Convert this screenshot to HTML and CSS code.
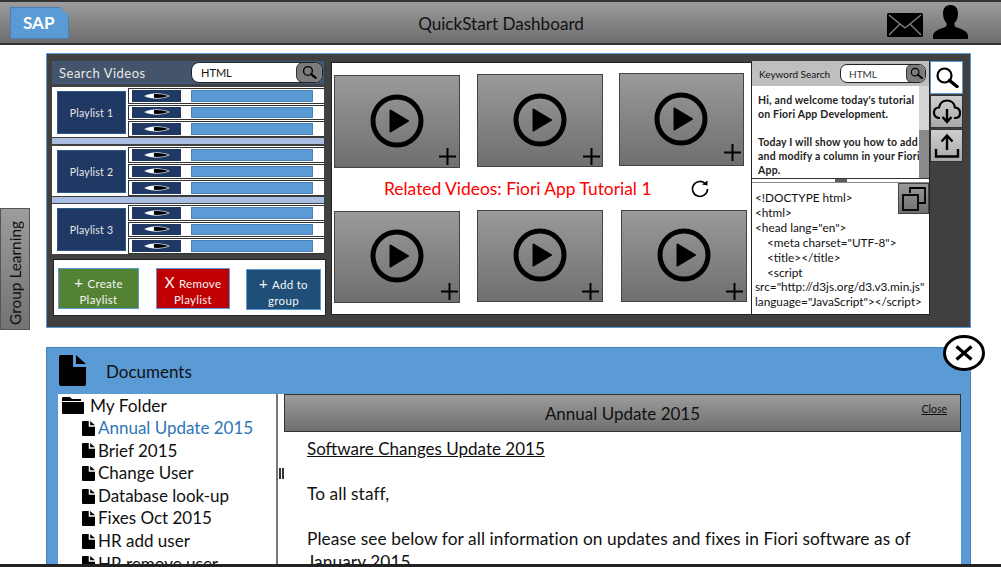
FILE: index.html
```html
<!DOCTYPE html>
<html lang="en">
<head>
<meta charset="UTF-8">
<title>QuickStart Dashboard</title>
<link rel="stylesheet" href="styles.css">
</head>
<body>
<svg class="defs" width="0" height="0" aria-hidden="true">
  <defs>
    <symbol id="eye" viewBox="0 0 26 8"><path d="M0 4C7 .5 18 .2 26 4 18 7.800 7 7.500 0 4Z" fill="#dfe7f2"/><path d="M2 4C5 2.500 7 2 9 2V6C7 6 5 5.500 2 4Z" fill="#fff"/><path d="M10 2.200C15 1.700 20 2.500 24.500 4 20 5.500 15 6.300 10 5.800Z" fill="#000"/></symbol>
    <symbol id="play" viewBox="0 0 54 54"><circle cx="27" cy="27" r="24" fill="none" stroke="#000" stroke-width="5"/><path d="M20.500 16.500 38 27 20.500 37.500Z" fill="#000" stroke="#000" stroke-width="2" stroke-linejoin="round"/></symbol>
    <symbol id="plus" viewBox="0 0 17 17"><path d="M8.500 0V17M0 8.500H17" stroke="#000" stroke-width="2" fill="none"/></symbol>
    <symbol id="lens-icon" viewBox="0 0 24 24"><circle cx="9.500" cy="9.500" r="7" fill="none" stroke="#000" stroke-width="2.200"/><path d="M14.500 14.500 22 20.500" stroke="#000" stroke-width="3.500" stroke-linecap="round"/></symbol>
    <symbol id="file" viewBox="0 0 27 31"><path d="M2 0H14V12H27V29A2 2 0 0 1 25 31H2A2 2 0 0 1 0 29V2A2 2 0 0 1 2 0ZM17 0 27 9H17Z" fill="#000"/></symbol>
  </defs>
</svg>

<header class="topbar">
  <div class="sap">SAP</div>
  <h1 class="title">QuickStart Dashboard</h1>
  <svg class="mail" viewBox="0 0 36 24"><rect width="36" height="24" rx="1.500" fill="#000"/><path d="M2 2 18 15 34 2M2 22 13 11M34 22 23 11" stroke="#8a8a8a" stroke-width="1.200" fill="none"/></svg>
  <svg class="user" viewBox="0 0 35 34"><path d="M17.500 0C12.500 0 10 3.500 10 8.500 10 13 11.500 16 13.500 18V21C11 23.500 0 24.500 0 31V34H35V31C35 24.500 24 23.500 21.500 21V18C23.500 16 25 13 25 8.500 25 3.500 22.500 0 17.500 0Z" fill="#000"/></svg>
</header>

<div class="workspace">
  <div class="side-tab"><span>Group Learning</span></div>
  <section class="main-panel">
    <div class="left-col">
      <div class="search-bar">
        <span class="search-label">Search Videos</span>
        <div class="search-field">HTML<span class="search-btn"><svg class="search-glyph"><use href="#lens-icon"/></svg></span></div>
      </div>
      <div class="playlist pl-first">
        <div class="pl-name">Playlist 1</div>
        <div class="pl-rows">
          <div class="pl-row"><span class="pl-thumb"><svg class="eye"><use href="#eye"/></svg></span><span class="pl-bar"></span></div>
          <div class="pl-row"><span class="pl-thumb"><svg class="eye"><use href="#eye"/></svg></span><span class="pl-bar"></span></div>
          <div class="pl-row"><span class="pl-thumb"><svg class="eye"><use href="#eye"/></svg></span><span class="pl-bar"></span></div>
        </div>
      </div>
      <div class="pl-sep"></div>
      <div class="playlist pl-second">
        <div class="pl-name">Playlist 2</div>
        <div class="pl-rows">
          <div class="pl-row"><span class="pl-thumb"><svg class="eye"><use href="#eye"/></svg></span><span class="pl-bar"></span></div>
          <div class="pl-row"><span class="pl-thumb"><svg class="eye"><use href="#eye"/></svg></span><span class="pl-bar"></span></div>
          <div class="pl-row"><span class="pl-thumb"><svg class="eye"><use href="#eye"/></svg></span><span class="pl-bar"></span></div>
        </div>
      </div>
      <div class="pl-sep"></div>
      <div class="playlist pl-third">
        <div class="pl-name">Playlist 3</div>
        <div class="pl-rows">
          <div class="pl-row"><span class="pl-thumb"><svg class="eye"><use href="#eye"/></svg></span><span class="pl-bar"></span></div>
          <div class="pl-row"><span class="pl-thumb"><svg class="eye"><use href="#eye"/></svg></span><span class="pl-bar"></span></div>
          <div class="pl-row"><span class="pl-thumb"><svg class="eye"><use href="#eye"/></svg></span><span class="pl-bar"></span></div>
        </div>
      </div>
      <div class="actions">
        <button class="action green"><b>+</b> Create<br>Playlist</button>
        <button class="action red"><b>X</b> Remove<br>Playlist</button>
        <button class="action navy"><b>+</b> Add to<br>group</button>
      </div>
    </div>

    <div class="center-col">
      <div class="tile-row tile-row-top">
        <div class="tile t1"><svg class="play"><use href="#play"/></svg><svg class="add"><use href="#plus"/></svg></div>
        <div class="tile t2"><svg class="play"><use href="#play"/></svg><svg class="add"><use href="#plus"/></svg></div>
        <div class="tile t3"><svg class="play"><use href="#play"/></svg><svg class="add"><use href="#plus"/></svg></div>
      </div>
      <div class="related">
        <span class="related-text">Related Videos: Fiori App Tutorial 1</span>
        <svg class="refresh" viewBox="0 0 18 18"><path d="M14.500 3.800A7.500 7.500 0 1 0 16.500 9" fill="none" stroke="#000" stroke-width="1.600"/><path d="M11 4.500 16.500 5.500 16.500 .5Z" fill="#000"/></svg>
      </div>
      <div class="tile-row">
        <div class="tile t4"><svg class="play"><use href="#play"/></svg><svg class="add"><use href="#plus"/></svg></div>
        <div class="tile t5"><svg class="play"><use href="#play"/></svg><svg class="add"><use href="#plus"/></svg></div>
        <div class="tile t6"><svg class="play"><use href="#play"/></svg><svg class="add"><use href="#plus"/></svg></div>
      </div>
    </div>

    <div class="right-col">
      <div class="kw-bar">
        <span class="kw-label">Keyword Search</span>
        <div class="kw-field">HTML<span class="kw-btn"><svg class="kw-glyph"><use href="#lens-icon"/></svg></span></div>
      </div>
      <div class="transcript">
        <p class="transcript-text">Hi, and welcome today's tutorial<br>on Fiori App Development.<br><br>Today I will show you how to add<br>and modify a column in your Fiori<br>App.</p>
        <div class="scroll"><span class="scroll-thumb"></span></div>
      </div>
      <div class="splitter"><span class="grip"></span></div>
      <div class="code">
        <span class="copy-btn"><svg class="copy" viewBox="0 0 24 24"><path d="M8 6V1H23V16H17" fill="none" stroke="#000" stroke-width="1.800"/><rect x="1" y="8" width="15" height="15" fill="none" stroke="#000" stroke-width="1.800"/></svg></span>
        <div>&lt;!DOCTYPE html&gt;</div>
        <div>&lt;html&gt;</div>
        <div>&lt;head lang="en"&gt;</div>
        <div class="indent">&lt;meta charset="UTF-8"&gt;</div>
        <div class="indent">&lt;title&gt;&lt;/title&gt;</div>
        <div class="indent">&lt;script</div>
        <div>src="http://d3js.org/d3.v3.min.js"</div>
        <div>language="JavaScript"&gt;&lt;/script&gt;</div>
      </div>
    </div>

    <div class="tools">
      <div class="tool tool-on"><svg class="tool-search"><use href="#lens-icon"/></svg></div>
      <div class="tool"><svg class="tool-icon" viewBox="0 0 28 26"><path d="M7 19H6.500C3 19 1 16.500 1 13.500 1 10.500 3.300 8.500 6 8.500 7 4 10 1.500 14 1.500 18.500 1.500 21.500 4.500 22 8.500 25 8.800 27 11 27 14 27 17 25 19 22 19H21" fill="none" stroke="#000" stroke-width="2.200"/><path d="M14 10V22M9.500 18 14 23 18.500 18" fill="none" stroke="#000" stroke-width="2.400"/></svg></div>
      <div class="tool"><svg class="tool-icon" viewBox="0 0 28 26"><path d="M14 17V3M8.500 8.500 14 2.500 19.500 8.500" fill="none" stroke="#000" stroke-width="2.400"/><path d="M3 16V23.500H25V16" fill="none" stroke="#000" stroke-width="2.400"/></svg></div>
    </div>
  </section>
</div>

<section class="docs">
  <svg class="close-x" viewBox="0 0 42 36"><ellipse cx="21" cy="18" rx="19.500" ry="16.500" fill="#fff" stroke="#000" stroke-width="3"/><path d="M13.500 11.500 28.500 24.500M28.500 11.500 13.500 24.500" stroke="#000" stroke-width="3.200"/></svg>
  <div class="docs-head">
    <svg class="docs-icon"><use href="#file"/></svg>
    <h2 class="docs-title">Documents</h2>
  </div>
  <div class="docs-body">
    <nav class="tree">
      <div class="tree-root"><svg class="folder" viewBox="0 0 22 17"><path d="M1 0H8L10 2H19V4H0V1ZM0 5H22V16A1 1 0 0 1 21 17H1A1 1 0 0 1 0 16Z" fill="#000"/></svg>My Folder</div>
      <div class="tree-item active"><svg class="file"><use href="#file"/></svg>Annual Update 2015</div>
      <div class="tree-item"><svg class="file"><use href="#file"/></svg>Brief 2015</div>
      <div class="tree-item"><svg class="file"><use href="#file"/></svg>Change User</div>
      <div class="tree-item"><svg class="file"><use href="#file"/></svg>Database look-up</div>
      <div class="tree-item"><svg class="file"><use href="#file"/></svg>Fixes Oct 2015</div>
      <div class="tree-item"><svg class="file"><use href="#file"/></svg>HR add user</div>
      <div class="tree-item"><svg class="file"><use href="#file"/></svg>HR remove user</div>
    </nav>
    <div class="gutter"><span class="gutter-grip"></span></div>
    <article class="doc">
      <header class="doc-head">
        <span class="doc-title">Annual Update 2015</span>
        <a class="doc-close">Close</a>
      </header>
      <div class="doc-text">
        <p class="doc-heading">Software Changes Update 2015</p>
        <p>To all staff,</p>
        <p>Please see below for all information on updates and fixes in Fiori software as of January 2015</p>
      </div>
    </article>
  </div>
</section>
<div class="bottom-edge"></div>
</body>
</html>
```
FILE: styles.css
```css
* { box-sizing: border-box; }
html, body { margin: 0; height: 567px; overflow: hidden; background: #fff; }
body { font-family: "Lato", "Open Sans", sans-serif; color: #000; position: relative; }
.defs { position: absolute; }
svg { display: block; }

.topbar { height: 45px; display: flex; align-items: flex-start; border-top: 2px solid #333; border-bottom: 2px solid #333; background: linear-gradient(#9c9c9c, #6d6d6d); }
.sap { width: 59px; height: 32px; margin: 5px 0 0 10px; background: #5b9bd5; border: 1px solid #4a80b4; clip-path: polygon(0 0, 50px 0, 100% 9px, 100% 100%, 0 100%); color: #fff; font-weight: 700; font-size: 17px; line-height: 30px; padding-left: 12px; }
.title { flex: 1; margin: 0; font-size: 17.100px; font-weight: 400; text-align: center; line-height: 20px; padding-top: 12px; padding-left: 46px; color: #111; }
.mail { width: 36px; height: 24px; margin-top: 11px; }
.user { width: 35px; height: 34px; margin: 3px 33px 0 10px; }

.workspace { display: flex; align-items: flex-start; margin-top: 8px; }
.side-tab { width: 30px; height: 122px; margin: 155px 16px 0 0; padding-top: 8px; background: linear-gradient(#9c9c9c, #737373); border: 1px solid #555; display: flex; align-items: center; justify-content: center; }
.side-tab span { writing-mode: vertical-rl; transform: rotate(180deg); font-size: 15.400px; color: #111; white-space: nowrap; }

.main-panel { width: 925px; height: 275px; background: #404040; border: 1px solid #5b9bd5; display: flex; align-items: flex-start; padding: 7px 0 0 5px; }

.left-col { width: 274px; margin-right: 5px; }
.search-bar { height: 23px; width: 272px; background: #44546a; border: 1px solid #3a5a80; display: flex; align-items: center; justify-content: space-between; color: #e8e8e8; }
.search-label { font-size: 13px; letter-spacing: .5px; padding-left: 6px; }
.search-field { width: 132px; height: 21px; background: #fff; border: 1px solid #222; border-radius: 8px; display: flex; align-items: center; justify-content: space-between; padding-left: 9px; font-size: 11px; color: #111; overflow: hidden; }
.search-btn { width: 27px; height: 21px; margin-right: -1px; border-radius: 7px; background: #7c7c7c; border: 1px solid #333; display: flex; align-items: center; justify-content: center; }
.search-glyph { width: 17px; height: 15px; }

.playlist { width: 272px; height: 50px; background: #fff; display: flex; padding-top: 1px; }
.pl-first { margin-top: 3px; }
.pl-second { margin-top: 2px; }
.pl-third { margin-top: 1px; }
.pl-name { width: 69px; height: 43px; margin: 3px 0 0 5px; background: #1f3864; border: 1px solid #2e5a88; color: #e8e8e8; font-size: 10.500px; display: flex; align-items: center; justify-content: center; letter-spacing: .2px; }
.pl-rows { flex: 1; margin-left: 2px; display: flex; flex-direction: column; gap: 1px; }
.pl-row { height: 15.500px; background: #fff; border: 1px solid #333; border-right: 0; display: flex; align-items: stretch; padding: 1px 0 1px 3px; }
.pl-thumb { width: 49px; background: #1f3864; display: flex; align-items: center; justify-content: center; }
.eye { width: 26px; height: 8px; }
.pl-bar { width: 122px; margin-left: 10px; background: #5b9bd5; border: 1px solid #4a80b4; }
.pl-sep { width: 272px; height: 6px; margin-top: 1px; background: #a9bde0; }

.actions { width: 273px; height: 57px; margin-top: 5px; margin-left: 1px; background: #fff; border: 1px solid #222; display: flex; align-items: flex-start; padding-top: 8px; padding-left: 4px; }
.action { font-family: inherit; width: 81px; height: 41px; padding: 4px 0 0; color: #f4f4f4; font-size: 11.500px; line-height: 16px; letter-spacing: .3px; border: 1px solid #5b9bd5; text-align: center; }
.action b { font-weight: 400; font-size: 15px; margin-right: 1px; }
.green { background: #548235; }
.red { width: 74px; margin-left: 17px; background: #c00000; }
.navy { width: 75px; margin-left: 16px; background: #1f4e79; margin-top: 1px; }

.center-col { width: 420px; height: 253px; margin-top: 1px; background: #fff; border: 1px solid #222; border-right: 0; display: flex; flex-direction: column; }
.tile-row { display: flex; align-items: flex-start; padding-left: 2px; }
.tile-row-top { height: 105px; }
.tile { width: 126px; height: 93px; background: linear-gradient(#9a9a9a, #6f6f6f); border: 1px solid #444; display: flex; align-items: center; justify-content: center; position: relative; }
.t1 { margin-top: 12px; }
.t2 { margin-top: 11px; margin-left: 17px; }
.t3 { margin-top: 10px; margin-left: 16px; width: 125px; }
.t4 { height: 92px; }
.t5 { margin-top: -1px; margin-left: 17px; height: 92px; }
.t6 { margin-top: -1px; margin-left: 18px; height: 92px; }
.play { width: 54px; height: 54px; margin-left: -1px; margin-top: -2px; }
.add { width: 17px; height: 17px; position: absolute; right: 3px; bottom: 2px; }
.t2 .add { right: 2px; bottom: 1px; }
.t3 .add { right: 2px; bottom: 4px; }
.t4 .add { right: 1px; bottom: 2px; }
.t5 .add { right: 3px; bottom: 1px; }
.t6 .add { right: 3px; bottom: 1px; }
.related { height: 43px; display: flex; align-items: center; padding-left: 52px; padding-bottom: 2px; }
.related-text { width: 307px; color: #f00; font-size: 17.400px; white-space: nowrap; }
.refresh { width: 18px; height: 18px; }

.right-col { width: 179px; height: 254px; background: #7f7f7f; border: 1px solid #222; border-top: 0; display: flex; flex-direction: column; }
.kw-bar { height: 25px; background: #bfbfbf; display: flex; align-items: center; justify-content: space-between; padding-right: 3px; }
.kw-label { font-size: 10px; padding-left: 7px; color: #111; }
.kw-field { width: 86px; height: 19px; background: #fff; border: 1px solid #222; border-radius: 7px; display: flex; align-items: center; justify-content: space-between; padding-left: 8px; font-size: 10px; color: #333; overflow: hidden; }
.kw-btn { width: 20px; height: 19px; margin-right: -1px; background: #7c7c7c; border: 1px solid #333; border-radius: 6px; display: flex; align-items: center; justify-content: center; }
.kw-glyph { width: 13px; height: 13px; }
.transcript { height: 92px; display: flex; background: #fff; }
.transcript-text { flex: 1; margin: 0; padding: 7px 0 0 6px; font-size: 10.500px; line-height: 14px; letter-spacing: .2px; font-weight: 700; color: #222; white-space: nowrap; overflow: hidden; }
.scroll { width: 10px; background: #8a8a8a; }
.scroll-thumb { display: block; height: 44px; background: #d4d4d4; }
.splitter { height: 5px; background: #fff; border-top: 1px solid #333; border-bottom: 1px solid #888; display: flex; justify-content: center; }
.grip { width: 12px; background: #5c5c5c; }
.code { flex: 1; background: #fff; padding: 8px 0 0 3px; font-size: 11.800px; line-height: 14.900px; color: #111; white-space: nowrap; position: relative; overflow: hidden; }
.indent { padding-left: 12px; }
.copy-btn { position: absolute; top: 0; right: 0; width: 31px; height: 31px; background: linear-gradient(#9a9a9a, #6f6f6f); border: 1px solid #444; display: flex; align-items: center; justify-content: center; }
.copy { width: 24px; height: 24px; }

.tools { width: 33px; }
.tool { height: 33px; margin-bottom: 1px; background: linear-gradient(#cfcfcf, #a8a8a8); border: 1px solid #333; display: flex; align-items: center; justify-content: center; }
.tool-on { background: #fff; border-color: #5b9bd5; }
.tool-search { width: 24px; height: 24px; }
.tool-icon { width: 28px; height: 26px; }

.docs { width: 925px; height: 222px; margin: 17px 0 0 46px; background: #5b9bd5; border: 1px solid #4a80b4; position: relative; }
.close-x { position: absolute; right: -15px; top: -13px; width: 42px; height: 36px; }
.docs-head { height: 46px; display: flex; align-items: flex-start; padding: 7px 0 0 12px; }
.docs-icon { width: 27px; height: 31px; }
.docs-title { margin: 7px 0 0 20px; font-size: 17px; font-weight: 400; line-height: 20px; color: #111; }
.docs-body { display: flex; height: 180px; padding-left: 11px; }
.tree { width: 220px; background: #fff; border-right: 2px solid #777; overflow: hidden; padding-left: 4px; }
.tree-root { font-size: 17.300px; height: 23px; line-height: 23px; display: flex; align-items: center; color: #111; }
.folder { width: 22px; height: 17px; margin-right: 6px; }
.tree-item { font-size: 17px; height: 22.600px; line-height: 22.600px; padding-left: 20px; display: flex; align-items: center; color: #111; white-space: nowrap; }
.tree-item.active { color: #2e75b6; }
.file { width: 13px; height: 15px; margin-right: 3px; }
.gutter { width: 6px; background: #fff; display: flex; align-items: center; justify-content: center; padding-bottom: 22px; }
.gutter-grip { width: 5px; height: 11px; border-left: 2px solid #333; border-right: 2px solid #333; }
.doc { width: 677px; background: #fff; }
.doc-head { height: 38px; border: 1px solid #333; background: linear-gradient(#9c9c9c, #6f6f6f); display: flex; align-items: center; justify-content: center; position: relative; }
.doc-title { font-size: 17px; color: #111; }
.doc-close { position: absolute; right: 13px; top: 8px; font-size: 10.500px; text-decoration: underline; color: #111; }
.doc-text { padding: 6px 20px 0 23px; font-size: 17.300px; line-height: 22.500px; letter-spacing: .08px; color: #111; }
.doc-text p { margin: 0 0 22.500px; }
.doc-text .doc-heading { text-decoration: underline; font-size: 17px; letter-spacing: 0; }
.bottom-edge { position: absolute; left: 0; right: 0; bottom: 0; height: 3px; background: #222; }
```
